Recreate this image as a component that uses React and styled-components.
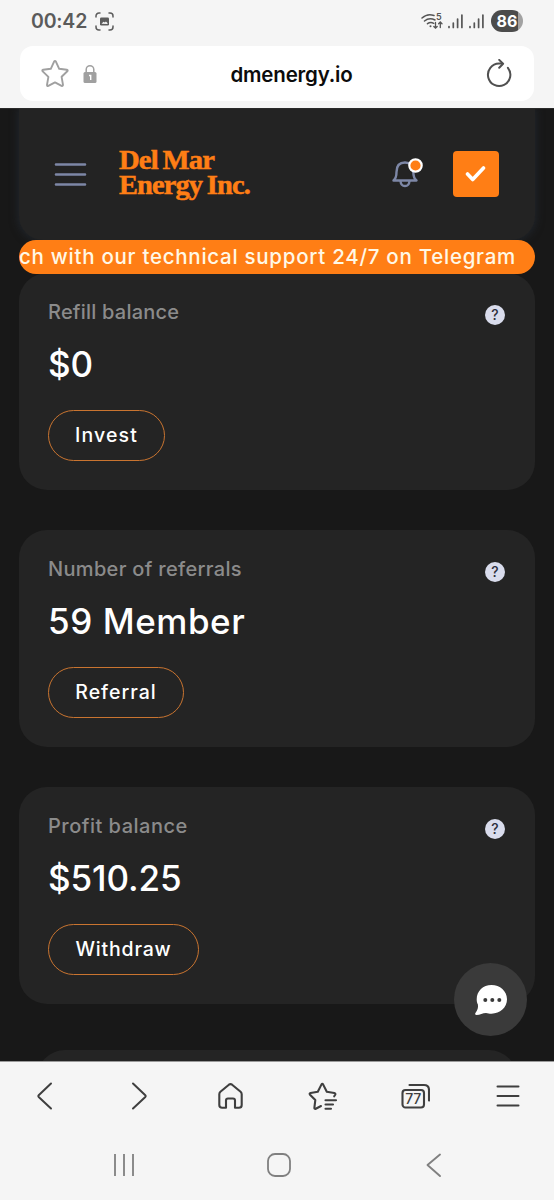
import React from 'react';
import styled, { createGlobalStyle } from 'styled-components';

const GlobalStyle = createGlobalStyle`
  :root {
    --orange: #ff7e15;
    --card: #242424;
    --bg: #181818;
    --chrome: #f5f5f5;
    --font-sans: Inter, 'Open Sans', sans-serif;
  }
  * {
    box-sizing: border-box;
  }
  body {
    margin: 0;
    background: var(--bg);
    font-family: var(--font-sans);
  }
  svg {
    display: block;
    flex: none;
  }
`;

const StyledPhone = styled.div`
  display: flex;
  flex-direction: column;
  width: 554px;
  height: 1200px;
  overflow: hidden;
`;

const StyledTop = styled.header`
  flex: none;
  height: 109px;
  background: var(--chrome);
  border-bottom: 1px solid #2a2a2a;
`;

const StyledStatusBar = styled.div`
  display: flex;
  align-items: center;
  height: 46px;
  padding: 0 31px 4px 31px;
  .time {
    width: 64px;
    color: #5b5b5b;
    font-size: 19.5px;
    font-weight: 600;
    letter-spacing: -0.2px;
    line-height: 24px;
    white-space: nowrap;
  }
  .signals {
    display: flex;
    align-items: center;
    margin-left: auto;
  }
`;

const StyledBattery = styled.span`
  width: 32px;
  height: 22px;
  margin-left: 5px;
  border-radius: 11px;
  background: linear-gradient(90deg, #4c4c4c 27px, #a2a2a2 27px);
  color: #fff;
  font-size: 16px;
  font-weight: 700;
  line-height: 22px;
  text-align: center;
`;

const StyledAddressBar = styled.div`
  display: grid;
  grid-template-columns: 80px 1fr 80px;
  align-items: center;
  height: 55px;
  margin: 0 20px;
  padding: 0 20px;
  border-radius: 13px;
  background: #fff;
  .left {
    display: flex;
    align-items: center;
    gap: 13px;
  }
  .url {
    padding-top: 2px;
    padding-left: 29px;
    color: #0c0c0c;
    font-size: 20.5px;
    font-weight: 600;
    letter-spacing: -0.2px;
    line-height: 28px;
    text-align: center;
    white-space: nowrap;
  }
  .right {
    display: flex;
    justify-content: flex-end;
  }
`;

const StyledPage = styled.main`
  position: relative;
  flex: 1;
  min-height: 0;
  padding: 0 19px;
  overflow: hidden;
  background: var(--bg);
`;

const StyledSiteHeader = styled.div`
  display: flex;
  align-items: center;
  height: 131px;
  padding: 0 36px 0 35px;
  border-radius: 0 0 24px 24px;
  background: #232323;
  box-shadow: 0 0 8px 1px rgba(42, 52, 66, 0.5);
  .logo {
    margin-left: 31px;
  }
  .bell {
    margin-top: -4px;
    margin-left: auto;
    margin-right: 28px;
  }
`;

const StyledCheck = styled.button`
  display: flex;
  align-items: center;
  justify-content: center;
  width: 46px;
  height: 46px;
  margin-top: -2px;
  padding: 0;
  border: 0;
  border-radius: 4px;
  background: var(--orange);
`;

const StyledTicker = styled.div`
  position: relative;
  display: flex;
  justify-content: flex-end;
  height: 34px;
  padding-right: 19px;
  border-radius: 17px;
  overflow: hidden;
  background: var(--orange);
  color: #fff8e6;
  font-size: 20.5px;
  font-weight: 500;
  letter-spacing: 0.73px;
  line-height: 33px;
  white-space: nowrap;
`;

const StyledCard = styled.section`
  display: flex;
  justify-content: space-between;
  height: 217px;
  margin-bottom: 40px;
  padding: 27px 30px 0 29px;
  border-radius: 28px;
  background: var(--card);
  &:first-of-type {
    margin-top: -1px;
  }
`;

const StyledNextCard = styled.section`
  height: 60px;
  margin: 46px 18px 0;
  border-radius: 28px;
  background: var(--card);
`;

const StyledLabel = styled.h3`
  margin: 0;
  color: #8b8b8b;
  font-size: 20px;
  font-weight: 500;
  letter-spacing: ${({ $spacing }) => $spacing}px;
  line-height: 24px;
`;

const StyledValue = styled.p`
  margin: 19px 0 0;
  color: #fff;
  font-size: 35px;
  font-weight: 500;
  letter-spacing: ${({ $spacing }) => $spacing}px;
  line-height: 42px;
`;

const StyledButton = styled.button`
  display: block;
  width: ${({ $width }) => $width}px;
  height: 51px;
  margin-top: 25px;
  padding: 0;
  border: 1px solid #c97430;
  border-radius: 26px;
  background: transparent;
  color: #fff;
  font-family: var(--font-sans);
  font-size: 19.5px;
  font-weight: 500;
  letter-spacing: ${({ $spacing }) => $spacing}px;
  line-height: 49px;
`;

const StyledHelp = styled.span`
  width: 20px;
  height: 20px;
  margin-top: 5px;
  border-radius: 50%;
  background: #d9dcec;
  color: #2c2e3c;
  font-size: 14px;
  font-weight: 500;
  line-height: 20px;
  text-align: center;
`;

const StyledChat = styled.button`
  position: absolute;
  right: 27px;
  bottom: 25px;
  display: flex;
  align-items: center;
  justify-content: center;
  width: 73px;
  height: 73px;
  padding: 0;
  border: 0;
  border-radius: 50%;
  background: #3a3a3a;
`;

const StyledBottom = styled.footer`
  flex: none;
  height: 139px;
  border-top: 1px solid #9a9a9a;
  background: var(--chrome);
`;

const StyledToolbar = styled.nav`
  display: grid;
  grid-template-columns: repeat(6, 92.5px);
  align-items: center;
  justify-items: center;
  height: 68px;
  margin-left: -1px;
`;

const StyledSystemNav = styled.nav`
  display: grid;
  grid-template-columns: repeat(3, 155px);
  justify-content: center;
  justify-items: center;
  align-items: center;
  height: 69px;
  padding-left: 3px;
`;

const cards = [
  { label: 'Refill balance', ls: 0.22, value: '$0', vs: 0, action: 'Invest', as: 1.1, width: 117 },
  { label: 'Number of referrals', ls: 0.32, value: '59 Member', vs: 0.55, action: 'Referral', as: 1, width: 136 },
  { label: 'Profit balance', ls: 0.5, value: '$510.25', vs: -0.1, action: 'Withdraw', as: 0.8, width: 151 },
];

const Signal = () => (
  <svg width="21" height="18" viewBox="0 0 21 18" stroke="#555" strokeWidth="1.7" strokeLinecap="round">
    <path d="M5 14.500v1M9.300 11v4.500M13.600 7v8.500M17.900 3v12.500" />
  </svg>
);

const StatusBar = () => (
  <StyledStatusBar>
    <span className="time">00:42</span>
    <svg width="19" height="19" viewBox="0 0 19 19" fill="none" stroke="#5c5c5c" strokeWidth="1.5" strokeLinecap="round">
      <path d="M1 5V4a3 3 0 0 1 3-3h1M14 1h1a3 3 0 0 1 3 3v1M18 14v1a3 3 0 0 1-3 3h-1M5 18H4a3 3 0 0 1-3-3v-1" />
      <rect x="5" y="5.5" width="9" height="8" rx="1.3" fill="#5c5c5c" stroke="none" />
      <path d="M6.5 11.8l2-2 1.4.8 1-1 1.6 1.5v.9z" fill="#f5f5f5" stroke="none" />
    </svg>
    <div className="signals">
      <svg width="23" height="18" viewBox="0 0 23 18" fill="none" stroke="#555" strokeWidth="1.5" strokeLinecap="round">
        <path d="M1 6C4.500 2.800 9 2 13 3.500M3.500 9C6.500 6.500 10 6 14 8M6.500 11.700c2-1.500 4.200-1.600 6.200-.4" />
        <circle cx="9.500" cy="14.200" r="1" fill="#555" stroke="none" />
        <path d="M14.500 10.500v5.500M12.800 14.500l1.700 1.700 1.700-1.700M19.300 15.500V10M17.600 11.700l1.700-1.700 1.700 1.700" strokeWidth="1.3" />
        <text x="15" y="8" fill="#555" stroke="none" fontSize="9" fontWeight="600">5</text>
      </svg>
      <Signal />
      <Signal />
      <StyledBattery>86</StyledBattery>
    </div>
  </StyledStatusBar>
);

const AddressBar = () => (
  <StyledAddressBar>
    <div className="left">
      <svg width="30" height="30" viewBox="0 0 30 30" fill="none" stroke="#a0a0a0" strokeWidth="1.9" strokeLinejoin="round">
        <path d="M14.100 2.600q.9-1.500 1.800 0l3.300 7.200 7.600.9q1.500.4.500 1.600l-5.700 5.500 1.400 8q0 1.500-1.400 1L15 23.400l-6.700 3.500q-1.400.5-1.300-1l1.400-8-5.700-5.500q-1-1.200.5-1.700l7.600-.9z" />
      </svg>
      <svg width="14" height="20" viewBox="0 0 14 20">
        <path d="M3.200 9V5.500a3.800 3.800 0 0 1 7.600 0V9" fill="none" stroke="#a0a0a0" strokeWidth="1.500" />
        <rect x=".5" y="8" width="13" height="11" rx="1.500" fill="#a0a0a0" />
        <path d="M6 11.500h1.700v4.500" fill="none" stroke="#fff" strokeWidth="1.400" />
      </svg>
    </div>
    <div className="url">dmenergy.io</div>
    <div className="right">
      <svg width="30" height="30" viewBox="0 0 30 30" fill="none" stroke="#505050" strokeWidth="2" strokeLinecap="round" strokeLinejoin="round">
        <path d="M23.900 8.800A11.200 11.200 0 1 1 15 4.600h3.300" />
        <path d="M15.200.9l3.900 3.900-3.900 4" />
      </svg>
    </div>
  </StyledAddressBar>
);

const SiteHeader = () => (
  <StyledSiteHeader>
    <svg width="33" height="26" viewBox="0 0 33 26" stroke="#7d87a6" strokeWidth="2.600" strokeLinecap="round">
      <path d="M2 2.500h29M2 12.500h29M2 22.500h29" />
    </svg>
    <svg className="logo" width="134" height="60" viewBox="0 0 134 60" fill="#ff7e15" stroke="#ff7e15" strokeWidth=".5" fontFamily="'Liberation Serif', serif" fontSize="27" fontWeight="700" wordSpacing="-1.500" letterSpacing="-.8">
      <text x="1" y="23.500" textLength="95" lengthAdjust="spacingAndGlyphs">Del Mar</text>
      <text x="1" y="48.700" textLength="131" lengthAdjust="spacingAndGlyphs">Energy Inc.</text>
    </svg>
    <svg className="bell" width="35" height="34" viewBox="0 0 35 34" fill="none">
      <path d="M3.500 24.500c2.800-2.300 3-4.500 3-8.500 0-6 3-9.500 8.500-9.500s8.300 3.500 8.300 9.500c0 4 .5 6.200 3.200 8.500z" stroke="#7d87a6" strokeWidth="2.400" strokeLinejoin="round" />
      <path d="M10.500 25c.3 3.400 2 5 4.500 5s4.200-1.600 4.500-5" stroke="#7d87a6" strokeWidth="2.400" />
      <circle cx="25.500" cy="9.500" r="6.200" fill="#ff7e15" stroke="#fff" strokeWidth="2.200" />
    </svg>
    <StyledCheck>
      <svg width="22" height="18" viewBox="0 0 22 18" fill="none" stroke="#fff" strokeWidth="3.600" strokeLinecap="round" strokeLinejoin="round">
        <path d="M2.500 9l5.200 5.500L18.500 3" />
      </svg>
    </StyledCheck>
  </StyledSiteHeader>
);

const App = () => (
  <StyledPhone>
    <GlobalStyle />
    <StyledTop>
      <StatusBar />
      <AddressBar />
    </StyledTop>

    <StyledPage>
      <SiteHeader />
      <StyledTicker>ch with our technical support 24/7 on Telegram</StyledTicker>
      {cards.map(({ label, ls, value, vs, action, as, width }) => (
        <StyledCard key={label}>
          <div>
            <StyledLabel $spacing={ls}>{label}</StyledLabel>
            <StyledValue $spacing={vs}>{value}</StyledValue>
            <StyledButton $spacing={as} $width={width}>{action}</StyledButton>
          </div>
          <StyledHelp>?</StyledHelp>
        </StyledCard>
      ))}
      <StyledNextCard />
      <StyledChat>
        <svg width="34" height="32" viewBox="0 0 34 32">
          <path d="M17.500 1C26 1 33 7 33 15.300S26 29.700 17.500 29.700c-2.200 0-3.700-.3-5.500-.7-3.300.2-6 1.800-9.500 2-1.400 0-1.800-1-.9-2.200 2-2.800 2.800-5 2.300-8.300C3 19 2.700 17 2.700 15.300 2.700 7 9 1 17.500 1z" fill="#fff" />
          <g fill="#3a3a3a">
            <circle cx="11.300" cy="16" r="2" />
            <circle cx="18.300" cy="16" r="2" />
            <circle cx="25.300" cy="16" r="2" />
          </g>
        </svg>
      </StyledChat>
    </StyledPage>

    <StyledBottom>
      <StyledToolbar>
        <svg width="30" height="30" viewBox="0 0 30 30" fill="none" stroke="#3f3f3f" strokeWidth="2" strokeLinecap="round" strokeLinejoin="round">
          <path d="M21 2.500L8.700 14.200q-.9.900 0 1.800L21 27.500" />
        </svg>
        <svg width="30" height="30" viewBox="0 0 30 30" fill="none" stroke="#3f3f3f" strokeWidth="2" strokeLinecap="round" strokeLinejoin="round">
          <path d="M10 2.500l12.300 11.700q.9.900 0 1.800L10 27.500" />
        </svg>
        <svg width="30" height="30" viewBox="0 0 30 30" fill="none" stroke="#3f3f3f" strokeWidth="2.100" strokeLinejoin="round">
          <path d="M4.300 13.200q0-1.500 1.100-2.500l8.500-7q1.600-1.200 3.200 0l8.500 7q1.100 1 1.100 2.500v10.700q0 2.800-2.800 2.800h-3.900v-7.200q0-2-2-2h-5q-2 0-2 2v7.200H7.100q-2.800 0-2.800-2.800z" />
        </svg>
        <svg width="30" height="30" viewBox="0 0 30 30" fill="none" stroke="#3f3f3f" strokeWidth="2.100" strokeLinecap="round" strokeLinejoin="round">
          <path d="M13 25l-5.200 2.700q-1.500.5-1.400-1l.9-7.600L2 13.700q-1-1.300.6-1.700l7.200-1.200 3.600-7.200q.9-1.400 1.800 0l3.600 7.200 7.500 1.200q1.600.4.900 1.700l-1 1.600" />
          <path d="M17.500 19.300h10.500M17.500 23.500h7.500M17.500 27.700h5.500" />
        </svg>
        <svg width="30" height="30" viewBox="0 0 30 30" fill="none" stroke="#3f3f3f" strokeWidth="2.100" strokeLinecap="round">
          <rect x="2.500" y="9" width="21.500" height="17.500" rx="3" />
          <path d="M9.500 4h14.500q5 0 5 5v10.500" />
          <text x="13.200" y="23" fill="#3f3f3f" stroke="none" fontSize="14" fontWeight="500" textAnchor="middle" letterSpacing="-.3">77</text>
        </svg>
        <svg width="30" height="30" viewBox="0 0 30 30" stroke="#3f3f3f" strokeWidth="2" strokeLinecap="round">
          <path d="M4.500 5.500h21M4.500 15h21M4.500 24.500h21" />
        </svg>
      </StyledToolbar>
      <StyledSystemNav>
        <svg width="26" height="26" viewBox="0 0 26 26" stroke="#808080" strokeWidth="1.800">
          <path d="M4 2v22M13 2v22M22 2v22" />
        </svg>
        <svg width="26" height="26" viewBox="0 0 26 26" fill="none" stroke="#808080" strokeWidth="1.800">
          <rect x="2" y="2" width="22" height="22" rx="7" />
        </svg>
        <svg width="26" height="26" viewBox="0 0 26 26" fill="none" stroke="#808080" strokeWidth="1.900" strokeLinecap="round" strokeLinejoin="round">
          <path d="M19 2.500L6.500 13 19 24" />
        </svg>
      </StyledSystemNav>
    </StyledBottom>
  </StyledPhone>
);

export default App;
